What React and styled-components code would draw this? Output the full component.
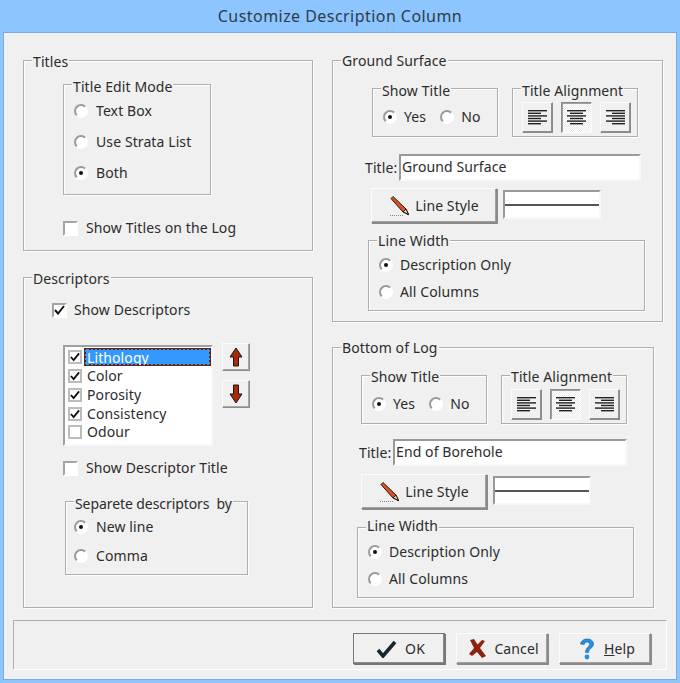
import React from 'react';
import styled, { createGlobalStyle, css } from 'styled-components';

const GlobalStyle = createGlobalStyle`
  * { box-sizing: border-box; }
  html, body { margin: 0; padding: 0; }
  body {
    font-family: "Noto Sans", "Open Sans", sans-serif;
    font-size: 14px;
    letter-spacing: 0.1px;
    color: #2c2c2c;
  }
`;

const raised = css`
  background: #f0f0f0;
  border: 1px solid;
  border-color: #fcfcfc #8a8a8a #8a8a8a #fcfcfc;
  box-shadow: inset -1px -1px 0 #a0a0a0, 1px 1px 0 #8a8a8a;
`;

const Window = styled.div`
  width: 680px;
  height: 683px;
  padding: 0 3px 3px;
  background: #8cc5ff;
  overflow: hidden;
`;
const TitleBar = styled.div`
  height: 32px;
  line-height: 32px;
  text-align: center;
  font-size: 16px;
  letter-spacing: 0.45px;
  color: #2f3c48;
`;
const Content = styled.div`
  height: 648px;
  padding: 27px 0 0 19px;
  background: #f0f0f0;
  border: 1px solid #76acdf;
`;
const Columns = styled.div`
  display: flex;
  gap: 19px;
`;
const Column = styled.div`
  display: flex;
  flex-direction: column;
`;

const Group = styled.div`
  position: relative;
  width: ${(p) => p.$w}px;
  height: ${(p) => p.$h}px;
  border: 1px solid #aeaeae;
  box-shadow: 1px 1px 0 #fff, inset 1px 1px 0 #fff;
`;
const Legend = styled.span`
  position: absolute;
  top: ${(p) => -10 + (p.$dy || 0)}px;
  left: 8px;
  padding: 0 1px;
  background: #f0f0f0;
  line-height: 18px;
  white-space: pre;
  letter-spacing: ${(p) => (p.$tight ? '-0.08px' : 'inherit')};
`;
const TitlesGroup = styled(Group)`
  padding: 23px 0 0 39px;
`;
const DescriptorsGroup = styled(Group)`
  margin-top: 26px;
  padding: 22px 0 0 28px;
`;
const SurfaceGroup = styled(Group)`
  margin-top: ${(p) => p.$top}px;
  padding-top: 27px;
`;
const RadioStack = styled(Group)`
  display: flex;
  flex-direction: column;
  gap: ${(p) => p.$gap}px;
  padding: ${(p) => p.$padTop}px 0 0 ${(p) => p.$padLeft}px;
  margin-top: ${(p) => p.$top || 0}px;
  margin-left: ${(p) => p.$left || 0}px;
`;

const Row = styled.label`
  display: flex;
  align-items: center;
  gap: ${(p) => p.$gap || 8}px;
  height: 20px;
  margin-top: ${(p) => p.$top || 0}px;
  margin-left: ${(p) => p.$left || 0}px;
  white-space: nowrap;
`;
const RowText = styled.span`
  margin-top: -2px;
`;
const RadioMark = styled.span`
  position: relative;
  flex: none;
  width: 14px;
  height: 14px;
  border-radius: 50%;
  border: 2px solid;
  border-color: #9a9a9a #fff #fff #9a9a9a;
  background: #fff;
  &::after {
    content: '';
    display: ${(p) => (p.$on ? 'block' : 'none')};
    position: absolute;
    top: 3px;
    left: 3px;
    width: 4px;
    height: 4px;
    border-radius: 50%;
    background: #111;
  }
`;
const CheckMark = styled.span`
  flex: none;
  display: flex;
  align-items: center;
  justify-content: center;
  width: ${(p) => p.$size || 15}px;
  height: ${(p) => p.$size || 15}px;
  background: #fff;
  border: 2px solid;
  border-color: ${(p) => (p.$flat ? '#bcbcbc' : '#a4a4a4 #fff #fff #a4a4a4')};
`;

const ListRow = styled.div`
  display: flex;
  align-items: flex-start;
  margin: 23px 0 0 11px;
`;
const ListBox = styled.div`
  width: 150px;
  height: 101px;
  margin-top: 2px;
  padding: 1px 0 0 3px;
  background: #fff;
  border: 2px solid;
  border-color: #a0a0a0 #f8f8f8 #f8f8f8 #a0a0a0;
`;
const ListItem = styled.div`
  display: flex;
  align-items: center;
  height: 18.75px;
`;
const ItemText = styled.span`
  flex: 1;
  height: 18px;
  margin-left: 2px;
  padding-left: 3px;
  line-height: 17px;
  ${(p) => p.$selected && css`
    line-height: 17px;
    overflow: hidden;
    background: #3399ff;
    color: #fff;
    outline: 2px dotted #6a1c08;
    outline-offset: -2px;
    border: 1px solid #5c2a18;
    padding-left: 2px;
  `}
`;
const ArrowColumn = styled.div`
  display: flex;
  flex-direction: column;
  gap: 9px;
  margin-left: 9px;
`;
const ArrowButton = styled.div`
  ${raised}
  box-shadow: inset -1px -1px 0 #a8a8a8;
  display: flex;
  align-items: center;
  justify-content: center;
  width: 28px;
  height: 28px;
`;

const TopRow = styled.div`
  display: flex;
  gap: 14px;
  margin-left: ${(p) => p.$left}px;
`;
const ShowTitleBox = styled(Group)`
  display: flex;
  gap: 14px;
  padding: 18px 0 0 10px;
`;
const AlignBox = styled(Group)`
  display: flex;
  gap: 8px;
  padding: 13px 0 0 9px;
`;
const AlignButton = styled.div`
  display: flex;
  align-items: center;
  justify-content: center;
  width: 31px;
  height: 31px;
  ${(p) => (p.$pressed
    ? css`
      border: 1px solid;
      border-color: #8a8a8a #fcfcfc #fcfcfc #8a8a8a;
      box-shadow: inset 1px 1px 0 #a0a0a0;
      background: repeating-conic-gradient(#fff 0 25%, #ececec 0 50%) 0 0 / 2px 2px;
    `
    : css`
      ${raised}
      box-shadow: inset -1px -1px 0 #8f8f8f;
    `)}
`;
const TitleRow = styled.div`
  display: flex;
  align-items: center;
  height: 27px;
  margin: ${(p) => p.$top}px 0 0 ${(p) => p.$left}px;
`;
const TitleLabel = styled.span`
  width: 34px;
`;
const TitleInput = styled.div`
  width: ${(p) => p.$w}px;
  height: 27px;
  padding-left: 1px;
  line-height: 21px;
  background: #fff;
  border: 2px solid;
  border-color: #999 #f8f8f8 #f8f8f8 #999;
`;
const LineRow = styled.div`
  display: flex;
  align-items: flex-start;
  gap: 6px;
  margin: ${(p) => p.$top}px 0 0 ${(p) => p.$left}px;
`;
const StyleButton = styled.div`
  ${raised}
  display: flex;
  align-items: center;
  justify-content: center;
  gap: 4px;
  width: 126px;
  height: 35px;
`;
const LineSwatch = styled.div`
  display: flex;
  align-items: center;
  width: 98px;
  height: 29px;
  margin-top: 2px;
  background: #fff;
  border: 2px solid;
  border-color: #999 #f8f8f8 #f8f8f8 #999;
  &::after {
    content: '';
    flex: 1;
    height: 2px;
    background: #555;
  }
`;

const Footer = styled.div`
  display: flex;
  justify-content: flex-end;
  gap: 11px;
  width: 654px;
  height: 50px;
  margin: 12px 0 0 -10px;
  padding: 12px 15px 0 0;
  border: 1px solid;
  border-color: #aeaeae #fff #fff #aeaeae;
`;
const DialogButton = styled.div`
  ${raised}
  display: flex;
  align-items: center;
  justify-content: center;
  gap: 8px;
  width: 92px;
  height: 31px;
  padding-left: 3px;
  ${(p) => p.$primary && css`
    border-color: #777;
    box-shadow: inset -1px -1px 0 #8a8a8a, 1px 1px 0 #777;
  `}
`;
const HotKey = styled.span`
  text-decoration: underline;
`;

const Check = () => (
  <svg width="11" height="10" viewBox="0 0 11 10">
    <path d="M1 5l3 3.5L10 1" fill="none" stroke="#111" strokeWidth="2" />
  </svg>
);

const Arrow = ({ down }) => (
  <svg width="14" height="20" viewBox="0 0 14 20">
    <path
      d={down ? 'M4.500 1h5v9H13l-6 9-6-9h3.500z' : 'M7 1l6 9H9.500v9h-5v-9H1z'}
      fill="#a62a0c"
      stroke="#1c1412"
    />
  </svg>
);

const AlignIcon = ({ mode }) => {
  const widths = [19, 13, 19, 13, 19, 13];
  return (
    <svg width="19" height="15" viewBox="0 0 19 15">
      {widths.map((w, i) => {
        let x = 0;
        if (mode === 'center') x = (19 - w) / 2;
        if (mode === 'right') x = 19 - w;
        return <rect key={i} x={x} y={i * 2.6} width={w} height="1.4" fill="#222" />;
      })}
    </svg>
  );
};

const Pencil = () => (
  <svg width="22" height="22" viewBox="0 0 22 22">
    <path d="M2 3.500L4 1.500 17 14l2.500 5.500L14 17z" fill="#d9541e" stroke="#2a1a14" />
    <path d="M14 17l3-3 2.500 5.500z" fill="#e8c9a0" stroke="#2a1a14" />
    <path d="M17.800 19.800l2 .5-.6-2z" fill="#111" />
    <path d="M1 20.500h13" stroke="#888" strokeDasharray="1 1" />
  </svg>
);

const OkIcon = () => (
  <svg width="21" height="18" viewBox="0 0 21 18">
    <path d="M2 10l5 6L19 2" fill="none" stroke="#16262c" strokeWidth="3.6" />
  </svg>
);

const CancelIcon = () => (
  <svg width="18" height="19" viewBox="0 0 18 19">
    <path d="M2 1l4-1 3.500 5.500L14 1l3 1-5 7 6 8-4 2-5-6-5 4-3-2 5-6z" fill="#8c2410" />
  </svg>
);

const HelpIcon = () => (
  <svg width="18" height="24" viewBox="0 0 18 24">
    <path
      d="M2.500 7C3 3.500 6 2 9 2c4 0 6.500 2 6.500 5 0 4-5 4.500-5 8.500H7.500C7.500 10.500 11.500 10 11.500 7.300 11.500 6 10.500 5 9 5 7.500 5 6.500 6 6.300 7.500z"
      fill="#2a8ee0"
      stroke="#14609c"
      strokeWidth="0.6"
    />
    <circle cx="9" cy="20" r="2.400" fill="#2a8ee0" />
  </svg>
);

const Radio = ({ on, label, gap }) => (
  <Row $gap={gap}>
    <RadioMark $on={on} />
    <RowText>{label}</RowText>
  </Row>
);

const CheckRow = ({ on, label, top, left, gap }) => (
  <Row $top={top} $left={left} $gap={gap}>
    <CheckMark>{on && <Check />}</CheckMark>
    <RowText>{label}</RowText>
  </Row>
);

const descriptors = [
  { name: 'Lithology', on: true, selected: true },
  { name: 'Color', on: true },
  { name: 'Porosity', on: true },
  { name: 'Consistency', on: true },
  { name: 'Odour', on: false },
];

const Surface = ({ legend, value, height, top, inputWidth, x, gaps, dy }) => (
  <SurfaceGroup $w={x.width} $h={height} $top={top}>
    <Legend $dy={1}>{legend}</Legend>
    <TopRow $left={x.top}>
      <ShowTitleBox $w={126} $h={49}>
        <Legend $dy={dy.inner}>Show Title</Legend>
        <Radio on label="Yes" gap={7} />
        <Radio label="No" gap={7} />
      </ShowTitleBox>
      <AlignBox $w={126} $h={49}>
        <Legend $dy={dy.inner}>Title Alignment</Legend>
        <AlignButton><AlignIcon mode="left" /></AlignButton>
        <AlignButton $pressed><AlignIcon mode="center" /></AlignButton>
        <AlignButton><AlignIcon mode="right" /></AlignButton>
      </AlignBox>
    </TopRow>
    <TitleRow $top={gaps[0]} $left={x.title}>
      <TitleLabel>Title:</TitleLabel>
      <TitleInput $w={inputWidth}>{value}</TitleInput>
    </TitleRow>
    <LineRow $top={gaps[1]} $left={x.line}>
      <StyleButton>
        <Pencil />
        Line Style
      </StyleButton>
      <LineSwatch />
    </LineRow>
    <RadioStack $w={277} $h={71} $gap={7} $padTop={14} $padLeft={10} $top={gaps[2]} $left={x.width2}>
      <Legend $dy={dy.width}>Line Width</Legend>
      <Radio on label="Description Only" gap={7} />
      <Radio label="All Columns" gap={7} />
    </RadioStack>
  </SurfaceGroup>
);

const App = () => (
  <Window>
    <GlobalStyle />
    <TitleBar>Customize Description Column</TitleBar>
    <Content>
      <Columns>
        <Column>
          <TitlesGroup $w={290} $h={191}>
            <Legend $dy={2}>Titles</Legend>
            <RadioStack $w={148} $h={111} $gap={11} $padTop={16} $padLeft={10}>
              <Legend $dy={3}>Title Edit Mode</Legend>
              <Radio label="Text Box" />
              <Radio label="Use Strata List" />
              <Radio on label="Both" />
            </RadioStack>
            <CheckRow label="Show Titles on the Log" top={23} />
          </TitlesGroup>
          <DescriptorsGroup $w={290} $h={331}>
            <Legend $dy={2}>Descriptors</Legend>
            <CheckRow on label="Show Descriptors" gap={7} />
            <ListRow>
              <ListBox>
                {descriptors.map((item) => (
                  <ListItem key={item.name}>
                    <CheckMark $flat $size={14}>{item.on && <Check />}</CheckMark>
                    <ItemText $selected={item.selected}>{item.name}</ItemText>
                  </ListItem>
                ))}
              </ListBox>
              <ArrowColumn>
                <ArrowButton><Arrow /></ArrowButton>
                <ArrowButton><Arrow down /></ArrowButton>
              </ArrowColumn>
            </ListRow>
            <CheckRow label="Show Descriptor Title" top={12} left={11} />
            <RadioStack $w={183} $h={74} $gap={9} $padTop={15} $padLeft={8} $top={23} $left={13}>
              <Legend $dy={3} $tight>Separete descriptors  by</Legend>
              <Radio on label="New line" />
              <Radio label="Comma" />
            </RadioStack>
          </DescriptorsGroup>
        </Column>
        <Column>
          <Surface
            legend="Ground Surface"
            value="Ground Surface"
            height={262}
            top={0}
            inputWidth={242}
            x={{ width: 331, top: 39, title: 32, line: 38, width2: 35 }}
            gaps={[17, 7, 17]}
            dy={{ inner: 3, width: 1 }}
          />
          <Surface
            legend="Bottom of Log"
            value="End of Borehole"
            height={261}
            top={25}
            inputWidth={234}
            x={{ width: 322, top: 28, title: 26, line: 28, width2: 24 }}
            gaps={[15, 8, 18]}
            dy={{ inner: 2, width: -1 }}
          />
        </Column>
      </Columns>
      <Footer>
        <DialogButton $primary><OkIcon />OK</DialogButton>
        <DialogButton><CancelIcon />Cancel</DialogButton>
        <DialogButton><HelpIcon /><span><HotKey>H</HotKey>elp</span></DialogButton>
      </Footer>
    </Content>
  </Window>
);

export default App;
